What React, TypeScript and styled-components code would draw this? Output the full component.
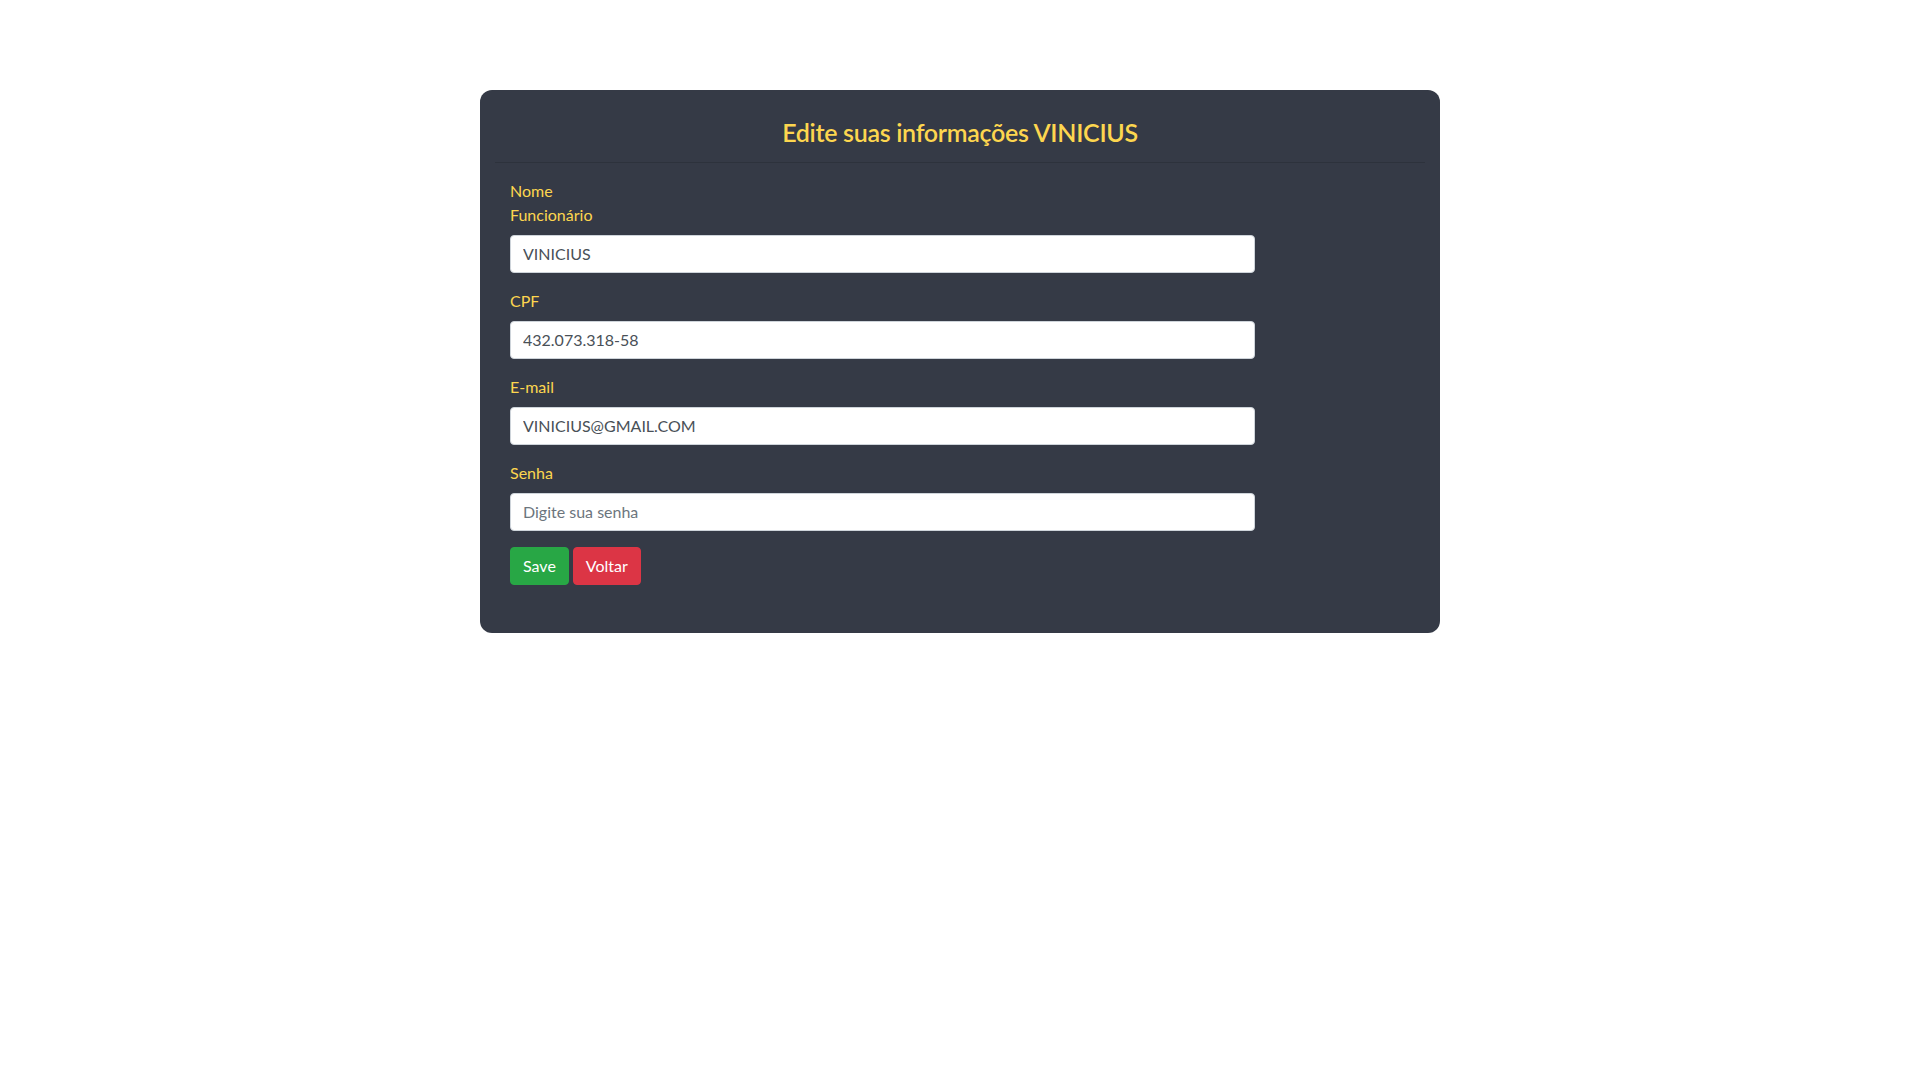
import React from "react";
import styled, { createGlobalStyle } from "styled-components";

const GlobalStyle = createGlobalStyle`
  html, body {
    margin: 0;
    padding: 0;
    background: #ffffff;
  }
  body {
    font-family: "Segoe UI", Lato, "Noto Sans", "Liberation Sans", sans-serif;
  }
  * { box-sizing: border-box; }
`;

const Page = styled.div`
  padding-top: 90px;
  display: flex;
  justify-content: center;
`;

const Card = styled.section`
  width: 960px;
  min-height: 543px;
  background: #353a46;
  border-radius: 12px;
  display: flex;
  flex-direction: column;
`;

const Header = styled.header`
  margin: 0 15px;
  padding: 26px 0 12px;
  border-bottom: 1px solid #2d323c;
  text-align: center;
`;

const Title = styled.h3`
  margin: 0;
  font-size: 25px;
  line-height: 33.6px;
  font-weight: 600;
  letter-spacing: -0.3px;
  color: #fdd64f;
`;

const Form = styled.form`
  padding: 16px 30px 48px;
  display: flex;
  flex-direction: column;
`;

const Field = styled.div`
  margin-bottom: 16px;
  display: flex;
  flex-direction: column;
  align-items: flex-start;
`;

const Label = styled.label`
  display: block;
  margin-bottom: 8px;
  font-size: 16px;
  line-height: 24px;
  color: #fdd64f;
`;

const Input = styled.input`
  width: 745px;
  height: 38px;
  padding: 6px 12px;
  font-family: inherit;
  font-size: 16px;
  line-height: 24px;
  color: #495057;
  background: #ffffff;
  border: 1px solid #ced4da;
  border-radius: 4px;
  outline: none;
  &::placeholder {
    color: #6c757d;
    opacity: 1;
  }
`;

const Actions = styled.div`
  display: flex;
  gap: 4px;
`;

const Button = styled.button<{ $variant: "success" | "danger" }>`
  height: 38px;
  padding: 6px 12px;
  font-family: inherit;
  font-size: 16px;
  line-height: 24px;
  color: #ffffff;
  border: 1px solid ${(p) => (p.$variant === "success" ? "#28a745" : "#dc3545")};
  background: ${(p) => (p.$variant === "success" ? "#28a745" : "#dc3545")};
  border-radius: 4px;
  cursor: pointer;
`;

export default function App() {
  return (
    <>
      <GlobalStyle />
      <Page>
        <Card>
          <Header>
            <Title>Edite suas informações VINICIUS</Title>
          </Header>
          <Form onSubmit={(e) => e.preventDefault()}>
            <Field>
              <Label htmlFor="nome">
                Nome
                <br />
                Funcionário
              </Label>
              <Input id="nome" defaultValue="VINICIUS" />
            </Field>
            <Field>
              <Label htmlFor="cpf">CPF</Label>
              <Input id="cpf" defaultValue="432.073.318-58" />
            </Field>
            <Field>
              <Label htmlFor="email">E-mail</Label>
              <Input id="email" defaultValue="VINICIUS@GMAIL.COM" />
            </Field>
            <Field>
              <Label htmlFor="senha">Senha</Label>
              <Input id="senha" type="password" placeholder="Digite sua senha" />
            </Field>
            <Actions>
              <Button type="submit" $variant="success">Save</Button>
              <Button type="button" $variant="danger">Voltar</Button>
            </Actions>
          </Form>
        </Card>
      </Page>
    </>
  );
}
